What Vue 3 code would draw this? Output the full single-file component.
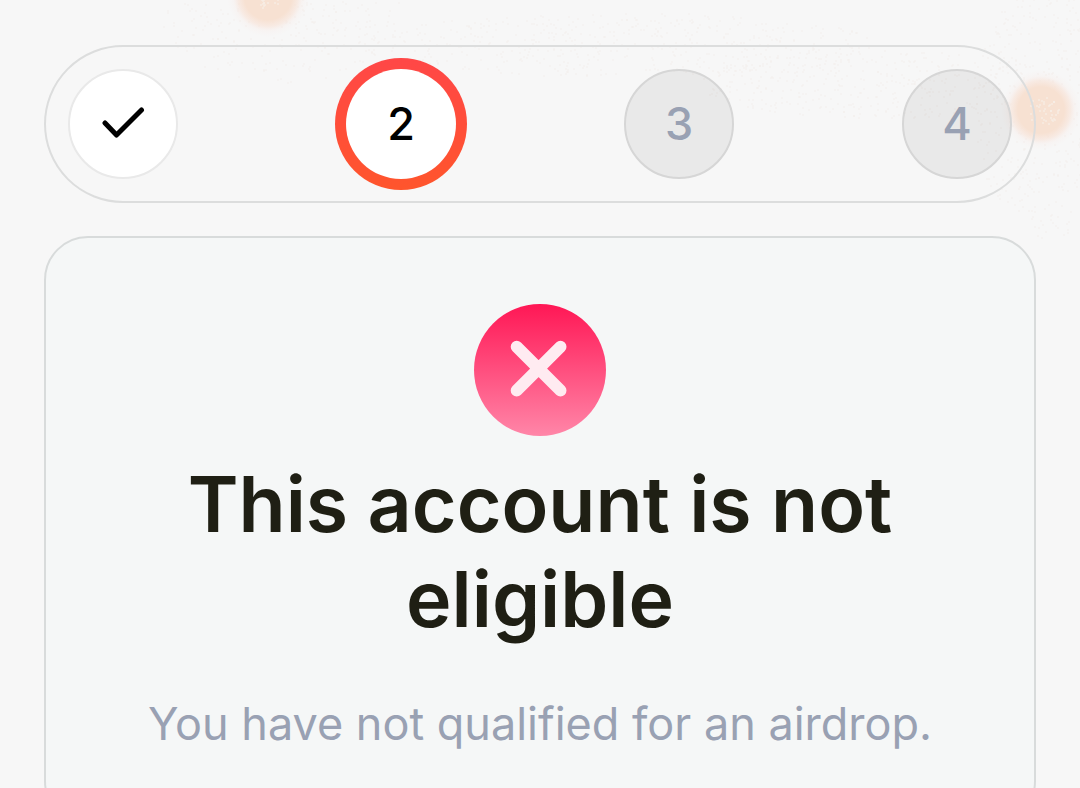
<script setup>
const steps = [
  { id: 1, state: 'done' },
  { id: 2, state: 'current' },
  { id: 3, state: 'upcoming' },
  { id: 4, state: 'upcoming' },
]

let seed = 7
const random = () => {
  seed = (seed * 16807) % 2147483647
  return seed / 2147483647
}

const scatter = (cx, cy, rx, ry, count) =>
  Array.from({ length: count }, () => {
    const angle = random() * Math.PI * 2
    const reach = Math.sqrt(random())
    return {
      x: Math.round(cx + Math.cos(angle) * reach * rx),
      y: Math.round(cy + Math.sin(angle) * reach * ry),
    }
  })

const glows = [
  { x: 268, y: -4, r: 31 },
  { x: 1041, y: 110, r: 30 },
]
const sparks = glows.flatMap((g) => scatter(g.x + 2, g.y + 1, 16, 14, 40))
const dust = [
  ...scatter(280, 10, 120, 75, 420),
  ...scatter(1050, 110, 75, 130, 500),
  ...scatter(620, 45, 260, 32, 500),
  ...scatter(880, 85, 180, 34, 400),
]
</script>

<template>
  <main class="page">
    <svg class="backdrop" aria-hidden="true">
      <defs>
        <radialGradient id="glow">
          <stop offset="0" stop-color="#f7e1d2" />
          <stop offset="0.58" stop-color="#f7e1d2" />
          <stop offset="0.74" stop-color="#f8e2d6" stop-opacity="0.6" />
          <stop offset="0.85" stop-color="#f8e6e0" stop-opacity="0.2" />
          <stop offset="1" stop-color="#f8e8e4" stop-opacity="0" />
        </radialGradient>
      </defs>
      <circle v-for="(d, i) in dust" :key="'d' + i" :cx="d.x" :cy="d.y" r="1" fill="#f3eeed" opacity="0.65" />
      <circle v-for="(g, i) in glows" :key="'g' + i" :cx="g.x" :cy="g.y" :r="g.r + 10" fill="url(#glow)" />
      <circle v-for="(s, i) in sparks" :key="'s' + i" :cx="s.x" :cy="s.y" r="1" fill="#f8efe6" opacity="0.8" />
    </svg>

    <ol class="stepper">
      <li
        v-for="step in steps"
        :key="step.id"
        :class="['step', step.state]"
        :aria-current="step.state === 'current' ? 'step' : undefined"
      >
        <svg v-if="step.state === 'done'" class="check" viewBox="0 0 44 44" role="img" aria-label="Completed">
          <path d="M4 21 15.500 33 40.500 8" />
        </svg>
        <span v-else class="number">{{ step.id }}</span>
      </li>
    </ol>

    <section class="card">
      <svg class="status" viewBox="0 0 132 132" aria-hidden="true">
        <defs>
          <linearGradient id="status-fill" x1="0" y1="0" x2="0" y2="1">
            <stop offset="0" stop-color="#ff1755" />
            <stop offset="1" stop-color="#ff86a8" />
          </linearGradient>
        </defs>
        <circle cx="66" cy="66" r="66" fill="url(#status-fill)" />
        <path class="cross" d="M42.700 42.700 86.500 86.500M86.500 42.700 42.700 86.500" />
      </svg>
      <h1 class="title">This account is not eligible</h1>
      <p class="message">You have not qualified for an airdrop.</p>
    </section>
  </main>
</template>

<style>
body {
  margin: 0;
  background: #f7f7f7;
}
</style>

<style scoped>
.page {
  position: relative;
  box-sizing: border-box;
  height: 100vh;
  overflow: hidden;
  padding: 45px 44px 0;
  font-family: Inter, "Liberation Sans", sans-serif;
}

.backdrop {
  position: absolute;
  inset: 0;
  width: 100%;
  height: 100%;
}

.stepper {
  position: relative;
  display: flex;
  justify-content: space-between;
  align-items: center;
  margin: 0 0 33px;
  padding: 22px;
  border: 2px solid #dcdddd;
  border-radius: 80px;
  list-style: none;
}

.step {
  display: flex;
  align-items: center;
  justify-content: center;
  box-sizing: border-box;
  width: 110px;
  height: 110px;
  border: 2px solid #d6d6d6;
  border-radius: 50%;
  background: rgba(0, 0, 0, 0.055);
  color: #99a1b3;
}

.done {
  border-color: #e9e9e9;
  background: #fff;
}

.current {
  width: 132px;
  height: 132px;
  margin: -11px;
  border: 11px solid transparent;
  background:
    linear-gradient(#fff, #fff) padding-box,
    linear-gradient(#ff4747, #ff552c) border-box;
  color: #000;
}

.number {
  font-size: 45px;
  font-weight: 500;
  line-height: 66px;
}

.check {
  width: 44px;
  height: 44px;
}

.check path {
  fill: none;
  stroke: #000;
  stroke-width: 5;
  stroke-linecap: round;
  stroke-linejoin: round;
}

.card {
  position: relative;
  display: flex;
  flex-direction: column;
  align-items: center;
  padding: 66px;
  border: 2px solid #d8dbdb;
  border-radius: 44px;
  background: #f5f7f7;
  text-align: center;
}

.status {
  width: 132px;
  height: 132px;
}

.cross {
  fill: none;
  stroke: #ffebf1;
  stroke-width: 12;
  stroke-linecap: round;
}

.title {
  margin: 21px 0 44px;
  color: #1f1f14;
  font-size: 77px;
  font-weight: 600;
  line-height: 95px;
}

.message {
  margin: 0;
  color: #99a1b3;
  font-size: 45px;
  line-height: 66px;
}
</style>
